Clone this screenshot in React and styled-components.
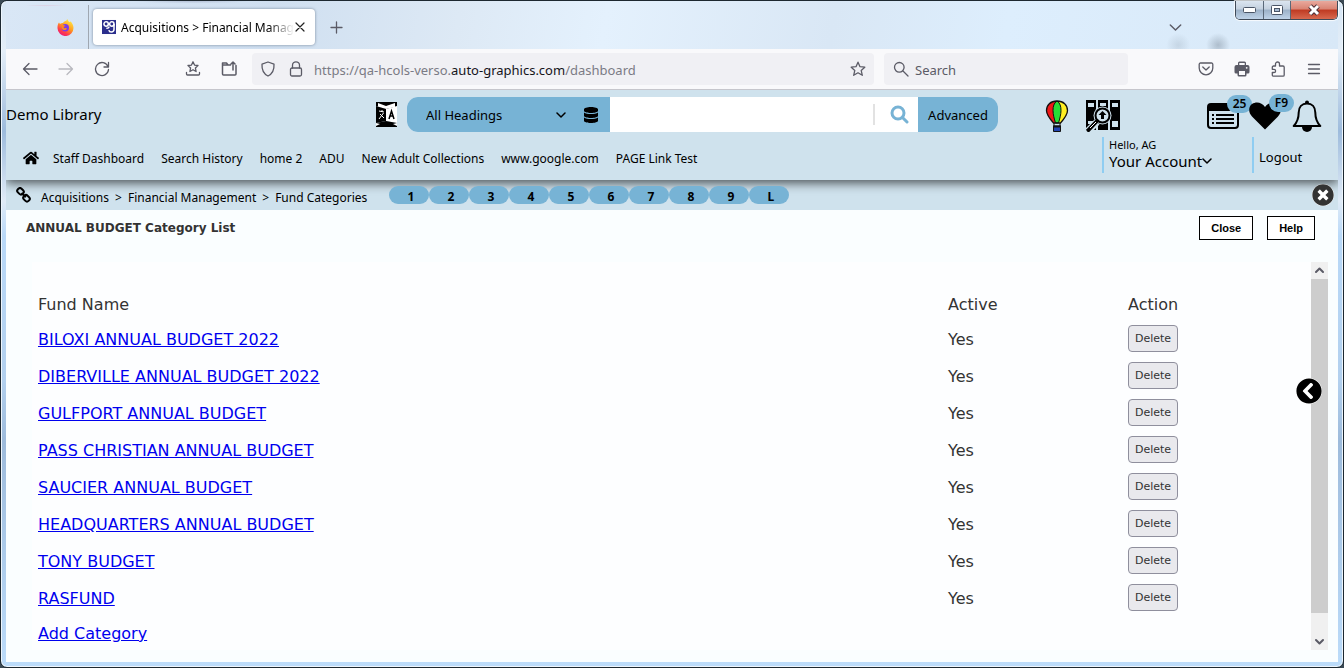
import React, { useState } from 'react'
import styled, { createGlobalStyle } from 'styled-components'
import { FaHome, FaDatabase, FaChevronCircleLeft, FaTimesCircle } from 'react-icons/fa'

const funds = [
  'BILOXI ANNUAL BUDGET 2022',
  'DIBERVILLE ANNUAL BUDGET 2022',
  'GULFPORT ANNUAL BUDGET',
  'PASS CHRISTIAN ANNUAL BUDGET',
  'SAUCIER ANNUAL BUDGET',
  'HEADQUARTERS ANNUAL BUDGET',
  'TONY BUDGET',
  'RASFUND',
]

const navLinks = ['Staff Dashboard', 'Search History', 'home 2', 'ADU', 'New Adult Collections', 'www.google.com', 'PAGE Link Test']

const shortcuts = ['1', '2', '3', '4', '5', '6', '7', '8', '9', 'L']

const GlobalStyle = createGlobalStyle`
  * { box-sizing: border-box; }
  body {
    margin: 0;
    background: #3b4a55;
    font-family: "Noto Sans", "Open Sans", sans-serif;
    font-size: 13px;
    color: #000;
  }
  button, input, select { font-family: inherit; }
  svg { display: block; }
`

const Window = styled.div`
  display: flex;
  flex-direction: column;
  min-height: 100vh;
  padding: 0 5px 5px;
  border: 1px solid #1d2830;
  border-radius: 7px;
  background: linear-gradient(#d5e5f4 0, #e4eef8 50px, #9dbbdc 130px, #e0ebf7 200px, #b9d9f8 235px, #b2d0ee 380px, #9dbbdb 440px, #bcdcfa 100%);
  box-shadow: inset 0 0 0 1px #eef6fd;
`

/* ---------- browser chrome ---------- */

const TitleBar = styled.div`
  display: flex;
  height: 48px;
  background:
    radial-gradient(ellipse at 3% 10%, rgba(225, 170, 195, 0.5), transparent 22px),
    radial-gradient(ellipse at 14% 0, rgba(160, 170, 195, 0.6), transparent 60px),
    radial-gradient(circle at 91% 44px, rgba(130, 145, 160, 0.5), transparent 12px),
    radial-gradient(circle at 88% 44px, rgba(150, 165, 180, 0.3), transparent 12px),
    linear-gradient(100deg, #d9e7f6 0, #cfdff0 20%, #dde9f5 34%, #e4f1fd 45%, #d9e7f5 62%, #ddeefd 75%, #d8e8f7 100%);
`

const PinnedTab = styled.div`
  width: 83px;
  margin-top: 4px;
  border-right: 1px solid #9fa7b1;
  padding: 14px 0 0 51px;
`

const Tab = styled.div`
  display: flex;
  align-items: center;
  width: 222px;
  height: 36px;
  margin: 8px 0 0 4px;
  padding: 0 9px;
  border-radius: 4px;
  background: #fff;
  box-shadow: 0 0 3px rgba(80, 95, 115, 0.7);
`

const TabTitle = styled.span`
  flex: 1;
  margin-left: 5px;
  white-space: nowrap;
  font-size: 12px;
  mask-image: linear-gradient(90deg, #000 85%, transparent);
`

const IconButton = styled.button`
  display: flex;
  align-items: center;
  justify-content: center;
  flex: none;
  width: ${(p) => p.$w || 36}px;
  height: ${(p) => p.$h || 32}px;
  padding: 0;
  border: 0;
  background: none;
  color: ${(p) => p.$color || '#5b5b66'};
  opacity: ${(p) => (p.disabled ? 0.4 : 1)};
`

const TitleTools = styled.div`
  display: flex;
  align-items: flex-start;
  margin-left: auto;
  gap: 42px;
`

const TabsMenu = styled.div`
  padding-top: 10px;
`

const WindowButtons = styled.div`
  display: flex;
  height: 19px;
  border: 1px solid #3f4a58;
  border-top: 0;
  border-radius: 0 0 5px 5px;
  overflow: hidden;
  box-shadow: 0 0 1px 1px rgba(255, 255, 255, 0.8);
`

const WindowButton = styled.button`
  display: flex;
  align-items: center;
  justify-content: center;
  width: ${(p) => (p.$close ? 47 : 27)}px;
  padding: 0;
  border: 0;
  border-left: ${(p) => (p.$first ? 0 : 1)}px solid #5a6878;
  background: ${(p) => p.$close
    ? 'linear-gradient(#e9a99d 0, #d98373 45%, #bf3a22 50%, #d8694f 100%)'
    : 'linear-gradient(#dbe5f0 0, #c3d0de 45%, #9cb1c8 50%, #bfd3e8 100%)'};
`

const Toolbar = styled.div`
  display: flex;
  align-items: center;
  height: 41px;
  padding: 0 6px;
  border-bottom: 1px solid #c6c6cc;
  background: #f9f9fb;
`

const ToolGroup = styled.div`
  display: flex;
  margin-left: ${(p) => p.$left || 0}px;
`

const UrlField = styled.div`
  display: flex;
  align-items: center;
  flex: 1;
  height: 32px;
  margin-left: 5px;
  padding-left: 2px;
  border-radius: 4px;
  background: #f0f0f4;
  color: #7b7b85;
`

const UrlText = styled.span`
  flex: 1;
  padding: 2px 0 0 4px;
  font-size: 13px;
  b { font-weight: 400; color: #15141a; }
`

const BrowserSearch = styled.label`
  display: flex;
  align-items: center;
  gap: 6px;
  width: 244px;
  height: 32px;
  margin-left: 10px;
  padding-left: 9px;
  border-radius: 4px;
  background: #f0f0f4;
  color: #5b5b66;
  input {
    flex: 1;
    min-width: 0;
    padding: 2px 0 0;
    border: 0;
    outline: 0;
    background: none;
    font-size: 13px;
    &::placeholder { color: #5b5b66; opacity: 1; }
  }
`

/* ---------- library page ---------- */

const Page = styled.div`
  display: flex;
  flex-direction: column;
  flex: 1;
  background: #fafeff;
`

const Header = styled.header`
  position: relative;
  display: flex;
  height: 90px;
  background: #cfe2ed;
  box-shadow: 0 3px 10px rgba(0, 0, 0, 0.65);
  clip-path: inset(0 0 -16px 0);
`

const HeaderMain = styled.div`
  flex: 1;
`

const SearchRow = styled.div`
  display: flex;
  align-items: center;
  height: 35px;
  margin-top: 7px;
`

const LibraryName = styled.div`
  width: 370px;
  padding-bottom: 2px;
  font-size: 15px;
`

const SearchGroup = styled.form`
  display: flex;
  flex: 1;
  height: 35px;
  margin-left: 10px;
  border-radius: 11px;
  overflow: hidden;
  background: #fff;
`

const HeadingPicker = styled.div`
  display: flex;
  align-items: center;
  width: 203px;
  padding: 0 11px 0 19px;
  background: #77b3d5;
  select {
    flex: 1;
    appearance: none;
    padding: 0;
    border: 0;
    background: none;
    font-size: 13px;
    color: #000;
  }
  svg:last-child { margin-left: 17px; }
`

const Keywords = styled.input`
  flex: 1;
  min-width: 0;
  border: 0;
  outline: 0;
  padding: 0 10px;
  font-size: 14px;
`

const SearchButton = styled.button`
  display: flex;
  align-items: center;
  width: 45px;
  margin: 7px 0;
  padding: 0 0 0 15px;
  border: 0;
  border-left: 2px solid #e2e2e2;
  background: none;
  color: #77b3d5;
`

const AdvancedButton = styled.button`
  width: 80px;
  padding: 0;
  border: 0;
  background: #77b3d5;
  font-size: 13px;
  color: #000;
`

const Nav = styled.nav`
  display: flex;
  align-items: center;
  gap: 17px;
  height: 32px;
  padding-left: 17px;
  margin-top: 10px;
  a {
    color: #000;
    text-decoration: none;
    font-size: 12px;
    white-space: nowrap;
  }
  svg { margin-right: -3px; }
`

const HeaderSide = styled.div`
  width: 293px;
  margin-left: 47px;
`

const SideIcons = styled.div`
  display: flex;
  align-items: center;
  height: 47px;
  padding-top: 5px;
`

const SideIcon = styled.button`
  position: relative;
  flex: none;
  margin-left: ${(p) => p.$left || 0}px;
  padding: 0;
  border: 0;
  background: none;
  color: #000;
`

const Badge = styled.span`
  position: absolute;
  top: ${(p) => p.$top || -8}px;
  left: 20px;
  width: 25px;
  height: 18px;
  border-radius: 9px;
  background: #77b3d5;
  font-size: 12px;
  font-weight: 600;
  line-height: 18px;
  text-align: center;
`

const AccountRow = styled.div`
  display: flex;
  height: 36px;
  padding-left: 57px;
`

const AccountBlock = styled.div`
  width: 150px;
  padding-left: 5px;
  border-left: 2px solid #8fcdf2;
  small {
    display: block;
    font-size: 11px;
    line-height: 15px;
  }
`

const AccountButton = styled.button`
  display: flex;
  align-items: center;
  padding: 0;
  border: 0;
  background: none;
  font-size: 15px;
  line-height: 18px;
  color: #000;
`

const Logout = styled.a`
  padding-left: 5px;
  border-left: 2px solid #8fcdf2;
  color: #000;
  font-size: 13px;
  line-height: 40px;
  text-decoration: none;
`

const CrumbBar = styled.div`
  display: flex;
  align-items: center;
  height: 30px;
  padding: 0 4px 0 10px;
  background: #cfe2ed;
`

const Crumbs = styled.div`
  display: flex;
  gap: 6px;
  padding: 4px 0 0 10px;
  font-size: 12px;
  white-space: nowrap;
  a { color: #000; text-decoration: none; }
`

const Shortcuts = styled.div`
  position: relative;
  display: flex;
  margin-left: 22px;
`

const Shortcut = styled.button`
  width: 40px;
  height: 18px;
  padding: 4px 0 0 3px;
  border: 0;
  border-radius: 9px;
  background: #77b3d5;
  font-size: 12px;
  font-weight: 700;
  line-height: 14px;
  color: #000;
`

const CloseCrumb = styled.button`
  position: relative;
  margin-left: auto;
  padding: 0;
  border: 0;
  border-radius: 50%;
  background: #fff;
  color: #333;
`

const TitleRow = styled.div`
  display: flex;
  justify-content: space-between;
  height: 52px;
  padding: 6px 23px 0 20px;
`

const Title = styled.h1`
  margin: 0;
  font-family: "DejaVu Sans", sans-serif;
  font-size: 12px;
  font-weight: 700;
  line-height: 24px;
  color: #333;
`

const Actions = styled.div`
  display: flex;
  gap: 14px;
`

const ActionButton = styled.button`
  height: 24px;
  padding: 0 11px;
  border: 1px solid #000;
  background: #fff;
  font-family: "Liberation Sans", sans-serif;
  font-size: 11px;
  font-weight: 700;
  color: #000;
`

const Panel = styled.main`
  position: relative;
  display: flex;
  flex: 1;
  margin: 0 10px 12px 26px;
  background: #fdfeff;
`

const PanelBody = styled.div`
  flex: 1;
  padding: 24px 3px 0 6px;
  font-family: "DejaVu Sans", sans-serif;
  font-size: 16px;
  color: #333;
  a { color: #0000ee; }
`

const FundTable = styled.table`
  width: 100%;
  border-collapse: collapse;
  table-layout: fixed;
  th, td {
    height: 37px;
    padding: 0;
    text-align: left;
    font-weight: 400;
  }
  th {
    height: 35px;
    padding-top: 2px;
  }
`

const StatusColumn = styled.col`
  width: 180px;
`

const AddLine = styled.div`
  padding-top: 7px;
`

const DeleteButton = styled.button`
  display: block;
  height: 27px;
  margin-bottom: 2px;
  padding: 0 6px;
  border: 1px solid #8f8f9d;
  border-radius: 4px;
  background: #e9e9ed;
  font-family: "DejaVu Sans", sans-serif;
  font-size: 11px;
  color: #333;
`

const ScrollTrack = styled.div`
  display: flex;
  flex-direction: column;
  width: 17px;
  background: #f0f0f0;
`

const ScrollThumb = styled.div`
  flex: 1;
  margin-bottom: 20px;
  background: #cdcdcd;
`

const DrawerButton = styled.button`
  position: absolute;
  top: 116px;
  right: 6px;
  padding: 0;
  border: 0;
  border-radius: 50%;
  background: #fff;
  color: #000;
`

/* ---------- drawings ---------- */

const Stroke = ({ size = 16, width = 1.3, box = 16, children }) => (
  <svg width={size} height={size} viewBox={`0 0 ${box} ${box}`} fill="none" stroke="currentColor" strokeWidth={width} strokeLinecap="round" strokeLinejoin="round">
    {children}
  </svg>
)

const FirefoxLogo = () => (
  <svg width="17" height="17" viewBox="0 0 17 17">
    <defs>
      <linearGradient id="fox" x1="0.8" y1="0" x2="0.2" y2="1">
        <stop offset="0" stopColor="#fff04a" />
        <stop offset="0.45" stopColor="#ff9a1f" />
        <stop offset="0.75" stopColor="#ff3b4c" />
        <stop offset="1" stopColor="#e31587" />
      </linearGradient>
    </defs>
    <path d="M2 3.5 3 5c1-.9 2-1 3-1C7 2.700 8 2 9.300 1.800 9.500 1 10 .5 10.600.2c.2 1.500 1 2.300 2.200 3.100.3-.2.4-.6.400-1 2 1.700 3.300 3.800 3.300 6.600a8 8 0 0 1-16 .3C.4 7 .9 5 2 3.500z" fill="url(#fox)" />
    <circle cx="8.300" cy="8.800" r="3.700" fill="#7a3bea" />
    <path d="M4.500 6.300c1.500-.7 3-.3 4.200.9-1.200 0-1.900.4-2 1-.1.700.8 1.100 1.700.9 1-.2 1.600.2 1.300.8-.9 1.500-3.800 1.500-4.900-.5-.6-1.100-.7-2.200-.3-3.100z" fill="#ff8a1e" />
  </svg>
)

const TabLogo = () => (
  <svg width="16" height="16" viewBox="0 0 16 16" fill="none" stroke="#fff" strokeWidth="1.700">
    <rect width="16" height="16" fill="#2b2e8c" stroke="none" />
    <circle cx="4.700" cy="4.600" r="2.500" />
    <circle cx="11.200" cy="4.600" r="2.500" />
    <path d="M13.700 4.500v6c0 2-1.200 3.300-3 3.300-1.600 0-2.600-.9-2.900-2.300M5 9.300c2 .2 3-.5 3-2" />
  </svg>
)

const ChevronDown = ({ size = 10, width = 1.5 }) => (
  <Stroke size={size} box={10} width={width}><path d="M1 3l4 4 4-4" /></Stroke>
)

const Star = () => (
  <Stroke><path d="M8 1.200l2 4.500 4.800.5-3.600 3.200 1.100 4.900L8 11.800l-4.300 2.500 1.100-4.900L1.200 6.200 6 5.700z" /></Stroke>
)

const Magnifier = () => (
  <Stroke><circle cx="6.300" cy="6.300" r="4.800" /><path d="M10 10l5 5" /></Stroke>
)

const ChainLink = () => (
  <svg width="15" height="16" viewBox="0 0 15 16" fill="none" stroke="#000" strokeWidth="2">
    <rect x="1.200" y="1.700" width="6.600" height="5.200" rx="2.200" transform="rotate(45 4.500 4.300)" />
    <rect x="7.200" y="8.700" width="6.600" height="5.200" rx="2.200" transform="rotate(45 10.500 11.300)" />
    <path d="M5.500 6l4.300 4.300" />
  </svg>
)

const Translate = () => (
  <svg width="21" height="25" viewBox="0 0 21 25">
    <path d="M0 0h21v5l-10 2L0 4z" />
    <path d="M2 1l8 3 9-3v4l-9 2-8-2z" fill="#fff" />
    <path d="M6 1h10l-5 2z" />
    <path d="M0 4l10 3v12L0 21z" />
    <path d="M10 7l11-3v17l-11-2z" fill="#fff" />
    <path d="M0 21l10-2 11 2v4H0z" />
    <path d="M0 21l4 1-4 2zM21 21l-4 1 4 2z" fill="#fff" />
    <path d="M3 9l5 1M6 8v2M7.500 11L3 17M4 12l4 4" stroke="#fff" strokeWidth="1" fill="none" />
    <path d="M13 17l2.500-8L18 17M14 14h3.500" stroke="#000" strokeWidth="1.500" fill="none" />
  </svg>
)

const Balloon = () => (
  <svg width="24" height="32" viewBox="0 0 24 32">
    <path d="M12 1C5.500 1 1.500 5 1.500 10.500c0 4.500 3.500 8.500 7 12.500h7c3.500-4 7-8 7-12.500C22.500 5 18.500 1 12 1z" fill="#f01818" />
    <path d="M12 1c6.500 0 10.500 4 10.500 9.500 0 4.500-3.500 8.500-7 12.500H12z" fill="#ffee22" />
    <path d="M12 1C8.800 3 8 6.500 8 10.500S9.300 19 10.500 23h3c1.200-4 2.500-8.500 2.500-12.500S15.200 3 12 1z" fill="#27dd35" stroke="#111" />
    <path d="M12 1C5.500 1 1.500 5 1.500 10.500c0 4.500 3.500 8.500 7 12.500h7c3.500-4 7-8 7-12.500C22.500 5 18.500 1 12 1z" fill="none" stroke="#111" strokeWidth="1.300" />
    <path d="M9 23v4M15 23v4" stroke="#111" />
    <path d="M8.500 26h7v5.500h-7z" fill="#2344b0" stroke="#111" />
    <path d="M8 26.500h8" stroke="#111" strokeWidth="2" />
  </svg>
)

const BookSearch = () => (
  <svg width="34" height="32" viewBox="0 0 34 32">
    <path d="M0 0h10v30H0zM12 0h10v30H12zM24 0h10v30H24z" />
    <path d="M2 3h6v4H2zM14 3h6v3h-6zM26 3h6v4h-6zM26 21h6v6h-6zM2 21h5v3H2z" fill="#cfe2ed" />
    <path d="M11 22L2 31" stroke="#cfe2ed" strokeWidth="7" />
    <circle cx="16.500" cy="15.500" r="9" fill="#cfe2ed" />
    <circle cx="16.500" cy="15.500" r="7" fill="#cfe2ed" stroke="#000" strokeWidth="2" />
    <path d="M11 21l-8.500 9" stroke="#000" strokeWidth="4" strokeLinecap="round" />
    <path d="M10 22l-6 6" stroke="#fff" strokeWidth="1" />
    <path d="M16.500 11l-4 4h2.500v4h3v-4h2.500z" />
  </svg>
)

const ListIcon = () => (
  <svg width="32" height="26" viewBox="0 0 32 26">
    <rect x="1" y="1" width="30" height="24" rx="3" fill="none" stroke="#000" strokeWidth="2" />
    <path d="M1 3a3 3 0 0 1 3-2h24a3 3 0 0 1 3 2v5H1z" />
    <path d="M9 12h18M9 16h18M9 20h18" stroke="#000" strokeWidth="2" />
    <path d="M5 12h2M5 16h2M5 20h2" stroke="#000" strokeWidth="2" />
  </svg>
)

const Heart = () => (
  <svg width="32" height="28" viewBox="0 0 32 28">
    <path d="M16 27.500L3 14.500C-1 10-.5 4.500 3 2 7.500-1 13 .5 16 5c3-4.500 8.500-6 13-3 3.500 2.500 4 8 0 12.500z" />
  </svg>
)

const Bell = () => (
  <svg width="30" height="32" viewBox="0 0 30 32">
    <path d="M10 27a5 5 0 0 0 10 0z" />
    <circle cx="15" cy="2.500" r="2" />
    <path d="M15 3.500c-5 0-8.300 3.500-8.300 9 0 7-1.700 10-5 13.500h26.600c-3.300-3.500-5-6.500-5-13.500 0-5.500-3.300-9-8.300-9z" fill="#cfe2ed" stroke="#000" strokeWidth="2" strokeLinejoin="round" />
  </svg>
)

const BrowserChrome = () => (
  <>
    <TitleBar>
      <PinnedTab><FirefoxLogo /></PinnedTab>
      <Tab>
        <TabLogo />
        <TabTitle>Acquisitions &gt; Financial Manag</TabTitle>
        <IconButton $w={12} $h={16} $color="#222" aria-label="Close tab">
          <Stroke size={10} box={10} width={1.2}><path d="M1 1l8 8M9 1L1 9" /></Stroke>
        </IconButton>
      </Tab>
      <IconButton $w={42} $h={53} aria-label="New tab">
        <Stroke size={13} box={13}><path d="M6.500 1v11M1 6.500h11" /></Stroke>
      </IconButton>
      <TitleTools>
        <TabsMenu>
          <IconButton aria-label="List all tabs"><ChevronDown size={13} width={1.1} /></IconButton>
        </TabsMenu>
        <WindowButtons>
          <WindowButton $first aria-label="Minimize">
            <svg width="13" height="6"><rect x="0.500" y="0.500" width="12" height="5" rx="1" fill="#fff" stroke="#4a5566" /></svg>
          </WindowButton>
          <WindowButton aria-label="Maximize">
            <svg width="12" height="10"><rect x="0.500" y="0.500" width="11" height="9" rx="1" fill="#fff" stroke="#4a5566" /><rect x="3.500" y="3.500" width="5" height="3" fill="#a9bcd2" stroke="#4a5566" /></svg>
          </WindowButton>
          <WindowButton $close aria-label="Close window">
            <svg width="14" height="12" viewBox="0 0 14 12"><path d="M3 2l8 8M11 2l-8 8" stroke="#4d3038" strokeWidth="5" /><path d="M3 2l8 8M11 2l-8 8" stroke="#fff" strokeWidth="3" /></svg>
          </WindowButton>
        </WindowButtons>
      </TitleTools>
    </TitleBar>
    <Toolbar>
      <ToolGroup>
        <IconButton aria-label="Back"><Stroke><path d="M15 8H1.500M7 2.500L1.500 8 7 13.500" /></Stroke></IconButton>
        <IconButton disabled aria-label="Forward"><Stroke><path d="M1 8h13.500M9 2.500L14.500 8 9 13.500" /></Stroke></IconButton>
        <IconButton aria-label="Reload"><Stroke><path d="M14 5.500A6.500 6.500 0 1 0 14.500 8.500M14.500 1.500v4.500H10" /></Stroke></IconButton>
      </ToolGroup>
      <ToolGroup $left={55}>
        <IconButton aria-label="Bookmarks">
          <Stroke><path d="M8 .8l1.500 3.300 3.500.4-2.600 2.400.7 3.600L8 8.700l-3.100 1.800.7-3.600L3 4.500l3.500-.4zM1.500 11.500v1.500a1 1 0 0 0 1 1h11a1 1 0 0 0 1-1v-1.500" /></Stroke>
        </IconButton>
        <IconButton aria-label="Share">
          <Stroke width={1.5}><path d="M9.500 4H7L5.500 2H1.500v11a1 1 0 0 0 1 1h11.500a1 1 0 0 0 1-1V4.500M1.500 4H7M12 9V1M10 3l2-2 2 2" /></Stroke>
        </IconButton>
      </ToolGroup>
      <UrlField>
        <IconButton $w={28} aria-label="Tracking protection">
          <Stroke><path d="M8 1l6 2.200c.3 5-1.500 9.500-6 11.800C3.500 12.700 1.700 8.200 2 3.200z" /></Stroke>
        </IconButton>
        <IconButton $w={28} aria-label="Site security">
          <Stroke><rect x="2.500" y="7" width="11" height="8" rx="1.500" /><path d="M4.500 7V4.300a3.500 3.500 0 0 1 7 0V7" /></Stroke>
        </IconButton>
        <UrlText>https://qa-hcols-verso.<b>auto-graphics.com</b>/dashboard</UrlText>
        <IconButton $w={32} aria-label="Bookmark this page"><Star /></IconButton>
      </UrlField>
      <BrowserSearch>
        <Magnifier />
        <input type="text" placeholder="Search" aria-label="Search the web" />
      </BrowserSearch>
      <ToolGroup $left={60}>
        <IconButton aria-label="Pocket">
          <Stroke><path d="M2.500 2h11a1.300 1.300 0 0 1 1.300 1.300V7a6.800 6.800 0 0 1-13.600 0V3.300A1.300 1.300 0 0 1 2.500 2zM4.800 6L8 9l3.200-3" /></Stroke>
        </IconButton>
        <IconButton aria-label="Print">
          <svg width="16" height="16" viewBox="0 0 16 16" fill="currentColor">
            <path d="M4 4V2a1.500 1.500 0 0 1 1.500-1.500h5A1.500 1.500 0 0 1 12 2v2h1.500A2 2 0 0 1 15.500 6v5a1.500 1.500 0 0 1-1.500 1.500h-1.500V14a1.500 1.500 0 0 1-1.500 1.500H5A1.500 1.500 0 0 1 3.500 14v-1.500H2A1.500 1.500 0 0 1 .5 11V6a2 2 0 0 1 2-2z" />
            <path d="M5.300 2h5.400v2H5.300zM5 10h6v4H5z" fill="#f9f9fb" />
            <circle cx="12.700" cy="6.800" r="0.900" fill="#f9f9fb" />
          </svg>
        </IconButton>
        <IconButton aria-label="Extensions">
          <Stroke><path d="M5.500 5V3a2 2 0 0 1 4 0v2H13a1.200 1.200 0 0 1 1.200 1.200V14a1.200 1.200 0 0 1-1.200 1.200H3.500A1.200 1.200 0 0 1 2.300 14v-2.500h1.700a1.600 1.600 0 0 0 0-3.200H2.300V6.200A1.200 1.200 0 0 1 3.500 5z" /></Stroke>
        </IconButton>
        <IconButton aria-label="Menu"><Stroke><path d="M2.500 3.500h11M2.500 8h11M2.500 12.500h11" /></Stroke></IconButton>
      </ToolGroup>
    </Toolbar>
  </>
)

const LibraryHeader = () => {
  const [keywords, setKeywords] = useState('')

  return (
    <Header>
      <HeaderMain>
        <SearchRow>
          <LibraryName>Demo Library</LibraryName>
          <SideIcon aria-label="Translate"><Translate /></SideIcon>
          <SearchGroup onSubmit={(e) => e.preventDefault()}>
            <HeadingPicker>
              <select aria-label="Search in"><option>All Headings</option></select>
              <ChevronDown />
              <FaDatabase size={16} />
            </HeadingPicker>
            <Keywords type="text" aria-label="Search the catalog" value={keywords} onChange={(e) => setKeywords(e.target.value)} />
            <SearchButton type="submit" aria-label="Search">
              <Stroke size={19} box={19} width={3}><circle cx="8" cy="8" r="6" /><path d="M12.500 12.500l4.500 4.500" /></Stroke>
            </SearchButton>
            <AdvancedButton type="button">Advanced</AdvancedButton>
          </SearchGroup>
        </SearchRow>
        <Nav>
          <FaHome size={16} />
          {navLinks.map((link) => <a href="#" key={link}>{link}</a>)}
        </Nav>
      </HeaderMain>
      <HeaderSide>
        <SideIcons>
          <SideIcon aria-label="Kids catalog"><Balloon /></SideIcon>
          <SideIcon $left={17} aria-label="Browse shelf"><BookSearch /></SideIcon>
          <SideIcon $left={87} aria-label="Lists"><ListIcon /><Badge>25</Badge></SideIcon>
          <SideIcon $left={10} aria-label="Favorites"><Heart /><Badge>F9</Badge></SideIcon>
          <SideIcon $left={11} aria-label="Notifications"><Bell /></SideIcon>
        </SideIcons>
        <AccountRow>
          <AccountBlock>
            <small>Hello, AG</small>
            <AccountButton>Your Account<ChevronDown /></AccountButton>
          </AccountBlock>
          <Logout href="#">Logout</Logout>
        </AccountRow>
      </HeaderSide>
    </Header>
  )
}

export default function App() {
  return (
    <>
      <GlobalStyle />
      <Window>
        <BrowserChrome />
        <Page>
          <LibraryHeader />
          <CrumbBar>
            <ChainLink />
            <Crumbs>
              <a href="#">Acquisitions</a>
              <span>&gt;</span>
              <a href="#">Financial Management</a>
              <span>&gt;</span>
              <a href="#">Fund Categories</a>
            </Crumbs>
            <Shortcuts>
              {shortcuts.map((s) => <Shortcut key={s}>{s}</Shortcut>)}
            </Shortcuts>
            <CloseCrumb aria-label="Close page"><FaTimesCircle size={22} /></CloseCrumb>
          </CrumbBar>
          <TitleRow>
            <Title>ANNUAL BUDGET Category List</Title>
            <Actions>
              <ActionButton>Close</ActionButton>
              <ActionButton>Help</ActionButton>
            </Actions>
          </TitleRow>
          <Panel>
            <PanelBody>
              <FundTable>
                <colgroup>
                  <col />
                  <StatusColumn />
                  <StatusColumn />
                </colgroup>
                <thead>
                  <tr><th>Fund Name</th><th>Active</th><th>Action</th></tr>
                </thead>
                <tbody>
                  {funds.map((fund) => (
                    <tr key={fund}>
                      <td><a href="#">{fund}</a></td>
                      <td>Yes</td>
                      <td><DeleteButton>Delete</DeleteButton></td>
                    </tr>
                  ))}
                </tbody>
              </FundTable>
              <AddLine><a href="#">Add Category</a></AddLine>
            </PanelBody>
            <ScrollTrack>
              <IconButton $w={17} $h={17} aria-label="Scroll up">
                <Stroke size={9} box={9} width={2}><path d="M1 6l3.500-3.500L8 6" /></Stroke>
              </IconButton>
              <ScrollThumb />
              <IconButton $w={17} $h={17} aria-label="Scroll down">
                <Stroke size={9} box={9} width={2}><path d="M1 3l3.500 3.500L8 3" /></Stroke>
              </IconButton>
            </ScrollTrack>
            <DrawerButton aria-label="Open drawer"><FaChevronCircleLeft size={26} /></DrawerButton>
          </Panel>
        </Page>
      </Window>
    </>
  )
}
